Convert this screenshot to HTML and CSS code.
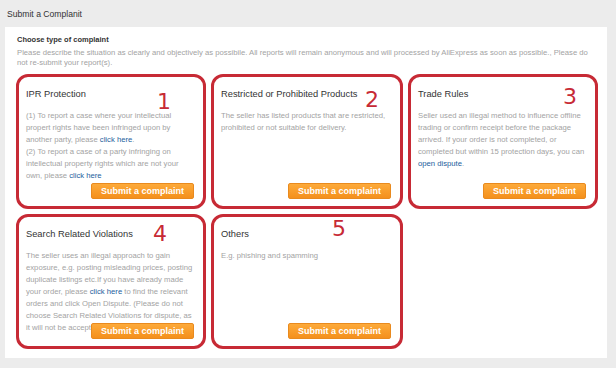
FILE: index.html
```html
<!DOCTYPE html>
<html lang="en">
<head>
  <meta charset="UTF-8"/>
  <title>Submit a Complanit</title>
  <link rel="stylesheet" href="styles.css">
</head>
<body>
  <h1 class="page-title">Submit a Complanit</h1>

  <div class="panel">
    <h2 class="panel-heading">Choose type of complaint</h2>
    <p class="panel-desc">Please describe the situation as clearly and objectively as possibile. All reports will remain anonymous and will processed by AliExpress as soon as possible., Please do not re-submit your report(s).</p>

    <div class="cards">
      <div class="card card-1">
        <span class="mark">1</span>
        <h3>IPR Protection</h3>
        <p>(1) To report a case where your intellectual propert rights have been infringed upon by another party, please <a href="#">click here</a>.<br>
        (2) To report a case of a party infringing on intellectual property rights which are not your own, please <a href="#">click here</a></p>
        <button class="btn">Submit a complaint</button>
      </div>

      <div class="card card-2">
        <span class="mark">2</span>
        <h3>Restricted or Prohibited Products</h3>
        <p>The seller has listed products that are restricted, prohibited or not suitable for delivery.</p>
        <button class="btn">Submit a complaint</button>
      </div>

      <div class="card card-3">
        <span class="mark">3</span>
        <h3>Trade Rules</h3>
        <p>Seller used an illegal method to influence offline trading or confirm receipt before the package arrived. If your order is not completed, or completed but within 15 protection days, you can <a href="#">open dispute</a>.</p>
        <button class="btn">Submit a complaint</button>
      </div>

      <div class="card card-4">
        <span class="mark">4</span>
        <h3>Search Related Violations</h3>
        <p>The seller uses an illegal approach to gain exposure, e.g. posting misleading prices, posting duplicate listings etc.If you have already made your order, please <a href="#">click here</a> to find the relevant orders and click Open Dispute. (Please do not choose Search Related Violations for dispute, as it will not be accepted.)</p>
        <button class="btn">Submit a complaint</button>
      </div>

      <div class="card card-5">
        <span class="mark">5</span>
        <h3>Others</h3>
        <p>E.g. phishing and spamming</p>
        <button class="btn">Submit a complaint</button>
      </div>
    </div>
  </div>
</body>
</html>
```

FILE: styles.css
```css
:root {
  --mark: #c72a35;
  --text: #333;
  --muted: #a3a3a3;
  --link: #23609c;
}
* { margin:0; padding:0; box-sizing:border-box; }
body {
  font-family:'Liberation Sans', Arial, sans-serif;
  background:#ececec; color:var(--text);
}
.page-title {
  font-size:8.6px; font-weight:normal; line-height:11px;
  padding:9px 7px 7px;
}
.panel {
  background:#fff; margin:0 9px 9px 5px;
  padding:8px 9px 9px 11px;
}
.panel-heading {
  font-size:7.5px; font-weight:bold; line-height:10px;
  margin-left:1px;
}
.panel-desc {
  font-size:7.7px; line-height:10px; color:var(--muted);
  margin:3px 0 6px 1px;
}
.cards {
  display:grid;
  grid-template-columns:190px 192px 190px;
  grid-auto-rows:135px;
  gap:5px;
}
.card {
  position:relative;
  border:3px solid var(--mark); border-radius:12px;
  padding:12px 7px 0;
}
.card h3 {
  font-size:9.3px; font-weight:normal; line-height:11px;
  margin-bottom:10px;
}
.card p {
  font-size:7.7px; line-height:12px; color:var(--muted);
}
.card a { color:var(--link); text-decoration:none; }
.mark {
  position:absolute;
  font-family:'DejaVu Sans', sans-serif;
  font-size:22px; line-height:22px; color:var(--mark);
}
.card-1 .mark { left:138px; top:14px; }
.card-2 .mark { left:151px; top:12px; }
.card-3 .mark { left:152px; top:9px; }
.card-4 .mark { left:134px; top:6px; }
.card-5 .mark { left:118px; top:1px; }
.btn {
  position:absolute; right:9px; bottom:7px;
  width:103px; height:16px;
  font-family:inherit; font-size:9px; font-weight:bold; color:#fff;
  background:linear-gradient(#fdaa3a, #f4901c);
  border:1px solid #e98a1e; border-radius:2px;
  cursor:pointer;
}
```
